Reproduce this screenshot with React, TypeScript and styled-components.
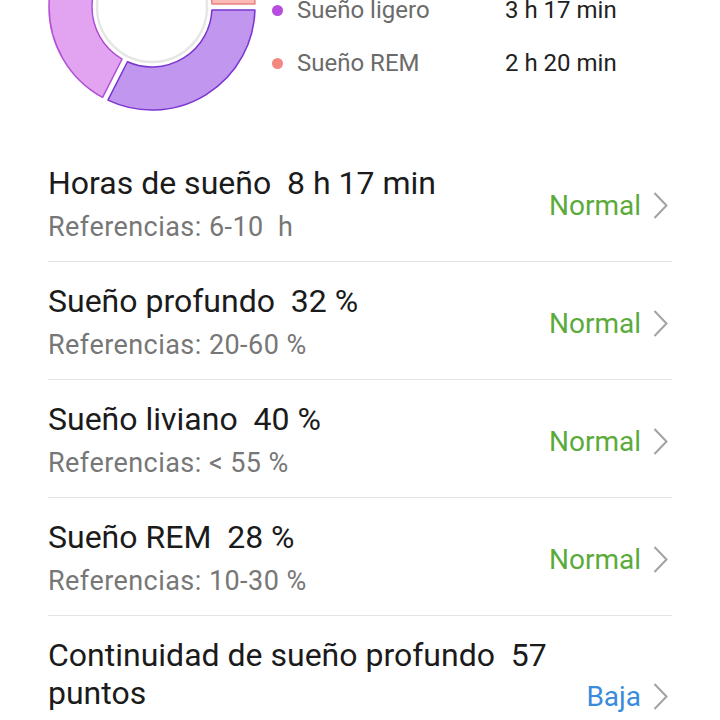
import React from "react";
import styled, { createGlobalStyle } from "styled-components";

const GlobalStyle = createGlobalStyle`
  html, body {
    margin: 0;
    padding: 0;
    background: #ffffff;
  }
  body {
    font-family: Roboto, "Noto Sans", "Liberation Sans", sans-serif;
    overflow: hidden;
  }
`;

const Page = styled.div`
  width: 720px;
  height: 720px;
  overflow: hidden;
  background: #ffffff;
`;

/* the page is scrolled: this is the scroll offset of the content */
const ScrollContent = styled.div`
  margin-top: -98px;
`;

const Summary = styled.section`
  display: flex;
  align-items: center;
  gap: 14px;
  padding-left: 47px;
  height: 210px;
`;

const ChartSvg = styled.svg`
  flex: none;
  width: 210px;
  height: 210px;
  display: block;
`;

const Legend = styled.div`
  display: flex;
  flex-direction: column;
  margin-top: 6px;
  margin-left: 1px;
`;

const LegendRow = styled.div`
  display: flex;
  align-items: center;
  height: 53px;
  font-size: 24px;
  line-height: 28px;
`;

const Dot = styled.span<{ $color: string }>`
  flex: none;
  width: 11px;
  height: 11px;
  border-radius: 50%;
  background: ${(p) => p.$color};
  margin-right: 14px;
`;

const LegendName = styled.span`
  width: 208px;
  color: #6b6b6b;
`;

const LegendValue = styled.span`
  color: #222222;
`;

const List = styled.div`
  margin: 32px 48px 0;
`;

const Row = styled.div`
  display: flex;
  align-items: center;
  padding: 20px 0 16px;
  border-bottom: 1px solid #e3e3e3;
`;

const RowText = styled.div`
  flex: 1;
  min-width: 0;
`;

const Title = styled.div`
  font-size: 32px;
  line-height: 38px;
  color: #1b1b1b;
  white-space: pre-wrap;
`;

const Sub = styled.div`
  margin-top: 7px;
  font-size: 27px;
  letter-spacing: 0.45px;
  line-height: 36px;
  color: #777777;
  white-space: pre-wrap;
`;

const Status = styled.span<{ $color: string }>`
  flex: none;
  font-size: 28px;
  line-height: 36px;
  color: ${(p) => p.$color};
  margin: 2px 12px 0 12px;
`;

const ChevronSvg = styled.svg`
  flex: none;
  width: 15px;
  height: 27px;
  margin: 2px 4px 0 0;
  display: block;
`;

const Chevron = () => (
  <ChevronSvg viewBox="0 0 15 27">
    <polyline
      points="1.5,1 13.5,13.5 1.5,26"
      fill="none"
      stroke="#a2a2a2"
      strokeWidth="2"
      strokeLinejoin="miter"
    />
  </ChevronSvg>
);

const CX = 105;
const CY = 105;
const R_OUT = 103;
const R_IN = 60;
const GAP = 3;

function pt(r: number, a: number) {
  return `${(CX + r * Math.cos(a)).toFixed(2)} ${(CY + r * Math.sin(a)).toFixed(2)}`;
}

function segmentPath(startDeg: number, endDeg: number) {
  const a1 = (startDeg * Math.PI) / 180;
  const a2 = (endDeg * Math.PI) / 180;
  const o1 = a1 + Math.asin(GAP / R_OUT);
  const o2 = a2 - Math.asin(GAP / R_OUT);
  const i1 = a1 + Math.asin(GAP / R_IN);
  const i2 = a2 - Math.asin(GAP / R_IN);
  const largeO = o2 - o1 > Math.PI ? 1 : 0;
  const largeI = i2 - i1 > Math.PI ? 1 : 0;
  return [
    `M ${pt(R_OUT, o1)}`,
    `A ${R_OUT} ${R_OUT} 0 ${largeO} 1 ${pt(R_OUT, o2)}`,
    `L ${pt(R_IN, i2)}`,
    `A ${R_IN} ${R_IN} 0 ${largeI} 0 ${pt(R_IN, i1)}`,
    "Z",
  ].join(" ");
}

const segments = [
  { from: 0, to: 117, fill: "#c196ef", stroke: "#7a34cf" },
  { from: 117, to: 245, fill: "#e2a4f1", stroke: "#b24fd4" },
  { from: 245, to: 360, fill: "#fbbcb7", stroke: "#e9847d" },
];

const Donut = () => (
  <ChartSvg viewBox="0 0 210 210">
    <circle cx={CX} cy={CY} r={55} fill="#ffffff" stroke="#e6e6e6" strokeWidth="2.5" />
    {segments.map((s) => (
      <path
        key={s.from}
        d={segmentPath(s.from, s.to)}
        fill={s.fill}
        stroke={s.stroke}
        strokeWidth="1.5"
        strokeLinejoin="round"
      />
    ))}
  </ChartSvg>
);

const legend = [
  { name: "Sueño profundo", value: "2 h 40 min", color: "#e08ef0" },
  { name: "Sueño ligero", value: "3 h 17 min", color: "#b64de0" },
  { name: "Sueño REM", value: "2 h 20 min", color: "#f4877f" },
];

const GREEN = "#5bab3c";
const BLUE = "#3a8bdc";

const rows = [
  { title: "Horas de sueño  8 h 17 min", sub: "Referencias: 6-10  h", status: "Normal", color: GREEN },
  { title: "Sueño profundo  32 %", sub: "Referencias: 20-60 %", status: "Normal", color: GREEN },
  { title: "Sueño liviano  40 %", sub: "Referencias: < 55 %", status: "Normal", color: GREEN },
  { title: "Sueño REM  28 %", sub: "Referencias: 10-30 %", status: "Normal", color: GREEN },
  {
    title: "Continuidad de sueño profundo  57 puntos",
    sub: "Referencias: 70-100 puntos",
    status: "Baja",
    color: BLUE,
  },
];

export default function App() {
  return (
    <Page>
      <GlobalStyle />
      <ScrollContent>
        <Summary>
          <Donut />
          <Legend>
            {legend.map((l) => (
              <LegendRow key={l.name}>
                <Dot $color={l.color} />
                <LegendName>{l.name}</LegendName>
                <LegendValue>{l.value}</LegendValue>
              </LegendRow>
            ))}
          </Legend>
        </Summary>
        <List>
          {rows.map((r) => (
            <Row key={r.title}>
              <RowText>
                <Title>{r.title}</Title>
                <Sub>{r.sub}</Sub>
              </RowText>
              <Status $color={r.color}>{r.status}</Status>
              <Chevron />
            </Row>
          ))}
        </List>
      </ScrollContent>
    </Page>
  );
}
